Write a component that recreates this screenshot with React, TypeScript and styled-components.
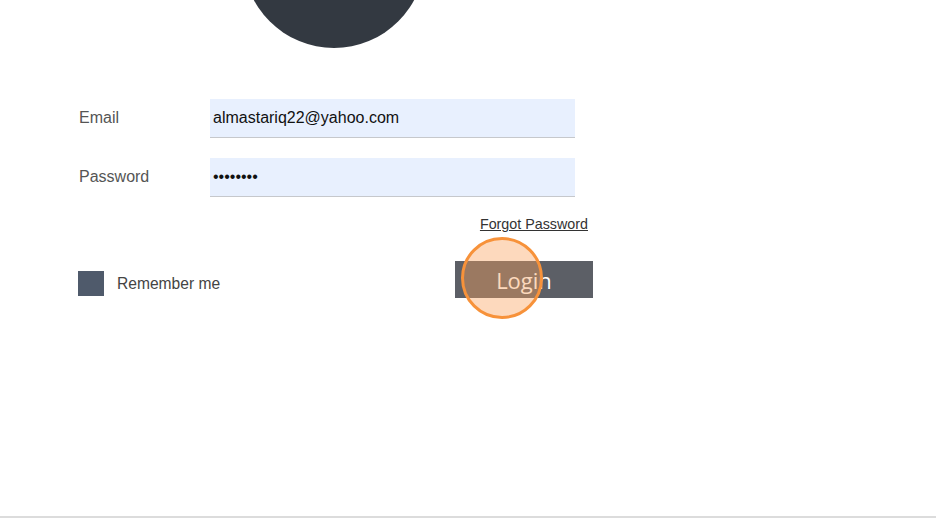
import React from "react";
import styled, { createGlobalStyle } from "styled-components";

const Global = createGlobalStyle`
  html, body { margin: 0; padding: 0; background: #fff; }
  body { font-family: "Liberation Sans", Arial, sans-serif; overflow: hidden; }
`;

const Page = styled.div`
  width: 936px;
  height: 518px;
  box-sizing: border-box;
  border-bottom: 2px solid #dcdcdc;
  overflow: hidden;
  position: relative;
`;

const Avatar = styled.div`
  width: 182px;
  height: 182px;
  border-radius: 50%;
  background: #333941;
  margin: -134px 0 0 243px;
`;

const Form = styled.form`
  width: 515px;
  margin: 51px 0 0 78px;
  display: flex;
  flex-direction: column;
`;

const Row = styled.div<{ $mb: number }>`
  display: flex;
  align-items: center;
  margin-bottom: ${(p) => p.$mb}px;
`;

const Label = styled.label`
  width: 132px;
  padding: 0 0 2px 1px;
  box-sizing: border-box;
  font-size: 16px;
  color: #555;
`;

const Input = styled.div`
  width: 365px;
  height: 39px;
  box-sizing: border-box;
  background: #e8f0fe;
  border-bottom: 1px solid #c6c8cc;
  display: flex;
  align-items: center;
  padding-left: 3px;
  font-size: 16px;
  color: #111;
`;

const Dots = styled.span`
  font-size: 16px;
  color: #111;
`;

const ForgotRow = styled.div`
  display: flex;
  justify-content: flex-end;
  padding-right: 5px;
  margin-top: 19px;
`;

const Forgot = styled.a`
  font-size: 14.3px;
  color: #333;
  text-decoration: underline;
  cursor: pointer;
`;

const Bottom = styled.div`
  display: flex;
  align-items: flex-end;
  justify-content: space-between;
  margin-top: 29px;
`;

const Remember = styled.div`
  display: flex;
  align-items: center;
  gap: 13px;
  margin-bottom: 2px;
  font-size: 15.6px;
  color: #444;
`;

const Check = styled.span`
  width: 26px;
  height: 25px;
  background: #4f5a6b;
  display: inline-block;
`;

const ButtonWrap = styled.div`
  position: relative;
`;

const LoginButton = styled.button`
  width: 138px;
  height: 37px;
  border: none;
  background: #5c5f66;
  color: #fff;
  font-family: "Open Sans", sans-serif;
  font-size: 22px;
  font-weight: 400;
  padding: 0;
  display: flex;
  align-items: center;
  justify-content: center;
`;

const ClickRing = styled.span`
  position: absolute;
  left: 6px;
  top: -24px;
  width: 76px;
  height: 76px;
  border-radius: 50%;
  border: 3px solid #f7923a;
  background: rgba(251, 160, 90, 0.4);
  pointer-events: none;
`;

export default function App() {
  return (
    <>
      <Global />
      <Page>
        <Avatar />
        <Form>
          <Row $mb={20}>
            <Label>Email</Label>
            <Input>almastariq22@yahoo.com</Input>
          </Row>
          <Row $mb={0}>
            <Label>Password</Label>
            <Input>
              <Dots>••••••••</Dots>
            </Input>
          </Row>
          <ForgotRow>
            <Forgot>Forgot Password</Forgot>
          </ForgotRow>
          <Bottom>
            <Remember>
              <Check />
              Remember me
            </Remember>
            <ButtonWrap>
              <LoginButton type="button">Login</LoginButton>
              <ClickRing />
            </ButtonWrap>
          </Bottom>
        </Form>
      </Page>
    </>
  );
}
